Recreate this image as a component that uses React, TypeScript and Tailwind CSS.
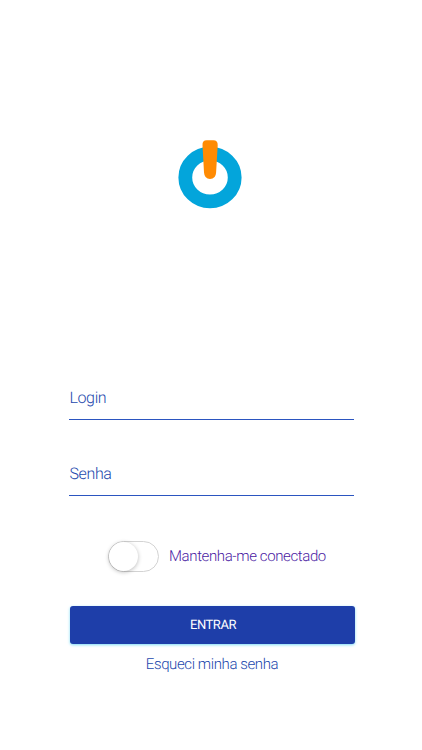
import { useState } from 'react'

type FieldProps = {
  label: string
  name: string
  type: string
}

const PowerLogo = () => (
  <svg className="h-[70px] w-16" viewBox="0 0 64 70" fill="none">
    <ellipse cx="32" cy="38.5" rx="24.7" ry="23.9" stroke="#03a5db" strokeWidth="13.8" />
    <path
      d="M28.7 1.2H35.3Q39.9 1.2 39.7 6.2L38.1 33.5Q37.7 40 32 40Q26.5 40 26 33.5L24.5 6.2Q24.2 1.2 28.7 1.2Z"
      fill="#ff8b03"
    />
  </svg>
)

const Field = ({ label, name, type }: FieldProps) => (
  <div className="border-b border-[#2b55c0]">
    <input
      name={name}
      type={type}
      placeholder={label}
      aria-label={label}
      className="block h-[45px] w-full bg-transparent p-0 pt-px pl-[0.4px] text-[16px] font-light tracking-[-0.35px] text-[#2348ad] outline-none [text-rendering:geometricPrecision] placeholder:text-[#2348ad] placeholder:opacity-100"
    />
  </div>
)

export default function App() {
  const [keepConnected, setKeepConnected] = useState(false)

  return (
    <main className="flex h-[750px] w-[422px] flex-col items-center overflow-hidden bg-white pt-[139px] font-['Roboto',sans-serif] [text-rendering:geometricPrecision]">
      <div className="mr-0.5">
        <PowerLogo />
      </div>

      <form className="mt-[165px] ml-px flex w-[285px] flex-col" onSubmit={(event) => event.preventDefault()}>
        <div className="space-y-[30px]">
          <Field label="Login" name="login" type="text" />
          <Field label="Senha" name="password" type="password" />
        </div>

        <div className="mt-[45px] ml-[39px] flex items-center gap-2.5">
          <button
            type="button"
            role="switch"
            aria-checked={keepConnected}
            aria-label="Mantenha-me conectado"
            onClick={() => setKeepConnected(!keepConnected)}
            className="flex h-[31px] w-[51px] shrink-0 rounded-full border border-[#d3d3d3] bg-white"
          >
            <span
              className={[
                'size-[29px] rounded-full bg-white shadow-[0_1px_4px_rgba(0,0,0,0.28)] transition',
                keepConnected ? 'translate-x-5' : '',
              ].join(' ')}
            />
          </button>
          <span className="pb-px text-[15px] font-light tracking-[-0.38px] whitespace-nowrap text-[#4b1ba3]">
            Mantenha-me conectado
          </span>
        </div>

        <button
          type="submit"
          className="mt-[34px] ml-px h-[38px] w-full shrink-0 rounded-[3px] bg-[#1e3ea9] pt-px pl-px text-[13px] tracking-[-0.45px] text-white shadow-[0_1px_3px_#7edcf7] [text-rendering:geometricPrecision]"
        >
          ENTRAR
        </button>
        <a
          href="#"
          className="mt-2 pl-px text-center text-[15px] leading-[25px] font-light tracking-[-0.4px] text-[#2348ad]"
        >
          Esqueci minha senha
        </a>
      </form>
    </main>
  )
}
